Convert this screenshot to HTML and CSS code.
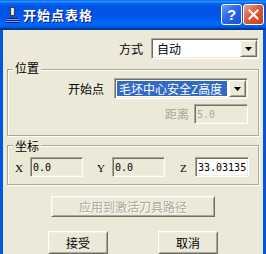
FILE: index.html
```html
<!DOCTYPE html>
<html lang="zh-CN">
<head>
<meta charset="utf-8">
<title>开始点表格</title>
<link rel="stylesheet" href="styles.css">
</head>
<body>
<div class="window">
  <div class="titlebar">
    <svg class="app-icon" width="15" height="16" viewBox="0 0 15 16">
      <rect x="5.5" y="0.5" width="4" height="8" fill="#d8d8d8" stroke="#404040"/>
      <rect x="7" y="1" width="1" height="7" fill="#ffffff"/>
      <path d="M6 9 L9 9 L7.5 11 Z" fill="#404040"/>
      <rect x="2" y="11" width="11" height="1" fill="#1a1a80"/>
      <rect x="1" y="12" width="13" height="1" fill="#6fa0ff"/>
      <rect x="0" y="13" width="15" height="1" fill="#1a1a80"/>
      <rect x="0" y="14" width="15" height="1" fill="#6fa0ff"/>
      <rect x="0" y="15" width="15" height="1" fill="#1a1a80"/>
    </svg>
    <span class="title">开始点表格</span>
    <div class="caption-buttons">
      <div class="cbtn help">?</div>
      <div class="cbtn close">
        <svg width="11" height="11" viewBox="0 0 11 11"><path d="M1.5 1.5 L9.5 9.5 M9.5 1.5 L1.5 9.5" stroke="#fff" stroke-width="2.2" stroke-linecap="square"/></svg>
      </div>
    </div>
  </div>
  <div class="client">
    <div class="row mode-row">
      <span class="label">方式</span>
      <div class="combo sunken combo-mode">
        <span class="combo-text">自动</span>
        <span class="drop raised"><svg width="7" height="4" viewBox="0 0 7 4"><path d="M0 0 H7 L3.5 4 Z" fill="#000"/></svg></span>
      </div>
    </div>

    <div class="group group-pos">
      <div class="legend">位置</div>
      <div class="row start-row">
        <span class="label">开始点</span>
        <div class="combo sunken combo-start">
          <span class="combo-text"><span class="selected">毛坯中心安全Z高度</span></span>
          <span class="drop raised"><svg width="7" height="4" viewBox="0 0 7 4"><path d="M0 0 H7 L3.5 4 Z" fill="#000"/></svg></span>
        </div>
      </div>
      <div class="row dist-row">
        <span class="label disabled">距离</span>
        <div class="field sunken readonly disabled-text field-dist">5.0</div>
      </div>
    </div>

    <div class="group group-coord">
      <div class="legend">坐标</div>
      <div class="coord-row">
        <span class="axis">X</span>
        <div class="field sunken readonly">0.0</div>
        <span class="axis">Y</span>
        <div class="field sunken readonly">0.0</div>
        <span class="axis">Z</span>
        <div class="field sunken">33.03135</div>
      </div>
    </div>

    <div class="apply-row">
      <button class="btn raised btn-apply" disabled>应用到激活刀具路径</button>
    </div>
    <div class="btn-row">
      <button class="btn raised">接受</button>
      <button class="btn raised">取消</button>
    </div>
  </div>
</div>
</body>
</html>
```
FILE: styles.css
```css
* { box-sizing: border-box; }
html, body { margin: 0; padding: 0; }
body {
  width: 266px;
  height: 254px;
  overflow: hidden;
  background: #ECE9D8;
  font-family: "Noto Sans CJK SC", "Noto Sans", sans-serif;
  font-size: 12px;
  color: #000;
}

.window {
  width: 266px;
  height: 254px;
  display: flex;
  flex-direction: column;
  background: #0055E5;
}

.titlebar {
  height: 30px;
  flex: none;
  display: flex;
  align-items: center;
  padding: 0 2px 0 5px;
  color: #fff;
  background: linear-gradient(to bottom,
    #0058EE 0%, #3593FF 4%, #288EFF 6%, #127DFF 8%, #036FFC 10%,
    #0262EE 14%, #0057E5 20%, #0054E3 24%, #0055EB 56%, #005BF5 66%,
    #026AFE 76%, #0062EF 86%, #0052D6 92%, #0040AB 94%, #003092 100%);
}
.app-icon { flex: none; margin-top: -1px; }
.title {
  margin-left: 3px;
  font-weight: bold;
  font-size: 13px;
  letter-spacing: 1px;
  line-height: 16px;
  text-shadow: 1px 1px #0A1883;
}
.caption-buttons {
  margin-left: auto;
  display: flex;
  gap: 1px;
  margin-top: -1px;
}
.cbtn {
  width: 21px;
  height: 21px;
  border: 1px solid #fff;
  border-radius: 3px;
  display: flex;
  align-items: center;
  justify-content: center;
}
.help {
  background: linear-gradient(to bottom right, #6E9BFA 0%, #2B66EB 45%, #1A4FD6 100%);
  font-family: "Liberation Sans", sans-serif;
  font-weight: bold;
  font-size: 15px;
  line-height: 1;
  color: #fff;
}
.close {
  background: linear-gradient(to bottom right, #EDA28A 0%, #E1593A 45%, #C5401B 100%);
}

.client {
  flex: 1;
  margin: 0 3px;
  background: #ECE9D8;
  padding: 8px 4px 0;
  display: flex;
  flex-direction: column;
}

.sunken {
  border: 1px solid;
  border-color: #ACA899 #FFFFFF #FFFFFF #ACA899;
  box-shadow: inset 1px 1px #716F64, inset -1px -1px #F1EFE2;
}
.raised {
  border: 1px solid;
  border-color: #FFFFFF #716F64 #716F64 #FFFFFF;
  box-shadow: inset 1px 1px #F1EFE2, inset -1px -1px #ACA899;
}

.row {
  display: flex;
  justify-content: flex-end;
  align-items: center;
}
.label { line-height: 14px; white-space: nowrap; }
.disabled { color: #ACA899; }

.mode-row { gap: 8px; }

.combo {
  display: flex;
  height: 21px;
  padding: 1px;
  background: #fff;
}
.combo-mode { width: 108px; }
.combo-text {
  flex: 1;
  display: flex;
  align-items: center;
  padding-left: 4px;
  line-height: 15px;
  overflow: hidden;
  white-space: nowrap;
}
.drop {
  flex: none;
  width: 17px;
  height: 17px;
  background: #ECE9D8;
  display: flex;
  align-items: center;
  justify-content: center;
}

.group {
  border: 1px solid #ACA899;
  box-shadow: inset 1px 1px #fff, 1px 1px #fff;
  padding: 0 10px 0 0;
}
.legend {
  align-self: flex-start;
  width: fit-content;
  margin-left: 5px;
  padding: 0 2px;
  background: #ECE9D8;
  line-height: 14px;
}
.group-pos {
  margin-top: 10px;
  padding-bottom: 11px;
}
.group-pos .legend { margin-top: -9px; }
.start-row { gap: 10px; margin-top: 3px; }
.combo-start { width: 134px; }
.combo-start .combo-text { padding-left: 1px; padding-right: 2px; }
.selected {
  display: block;
  width: 100%;
  background: #316AC5;
  color: #fff;
  padding-left: 2px;
  line-height: 15px;
  overflow: hidden;
}
.dist-row { gap: 5px; margin-top: 5px; }

.field {
  height: 20px;
  background: #fff;
  padding: 0 1px 0 2px;
  display: flex;
  align-items: center;
  font-family: "DejaVu Sans Mono", monospace;
  font-size: 10px;
  white-space: nowrap;
  overflow: hidden;
}
.readonly { background: #ECE9D8; }
.disabled-text { color: #ACA899; }
.field-dist { width: 54px; }

.group-coord {
  margin-top: 9px;
  padding-bottom: 7px;
}
.group-coord .legend { margin-top: -7px; }
.coord-row {
  margin-top: 4px;
  padding-left: 7px;
  display: grid;
  grid-template-columns: 15px 53px 14px 15px 53px 15px 15px 54px;
  align-items: center;
}
.coord-row .field:nth-of-type(2) { grid-column: 5; }
.coord-row .field:nth-of-type(3) { grid-column: 8; }
.coord-row .axis:nth-of-type(2) { grid-column: 4; }
.coord-row .axis:nth-of-type(3) { grid-column: 7; }
.axis {
  font-family: "Liberation Serif", serif;
  font-size: 11px;
  line-height: 14px;
  padding-top: 2px;
}

.btn {
  font-family: "Noto Sans CJK SC", sans-serif;
  font-size: 12px;
  line-height: 14px;
  background: #ECE9D8;
  color: #000;
  padding: 0;
  margin: 0;
}
.apply-row {
  margin-top: 11px;
  display: flex;
  justify-content: center;
}
.btn-apply {
  width: 164px;
  height: 21px;
  color: #ACA899;
  text-shadow: 1px 1px #fff;
}
.btn-row {
  margin-top: 14px;
  display: flex;
  justify-content: center;
  gap: 50px;
}
.btn-row .btn {
  width: 60px;
  height: 23px;
}
```
